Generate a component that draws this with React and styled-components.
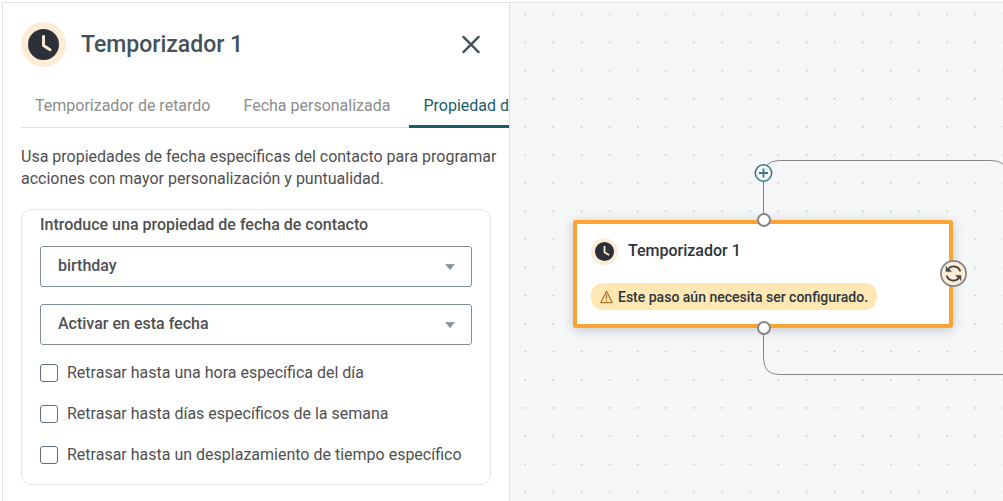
import React, { useState } from "react";
import styled, { createGlobalStyle } from "styled-components";

const GlobalStyle = createGlobalStyle`
    * {
        box-sizing: border-box;
    }
    body {
        margin: 0;
        background-color: #ffffff;
        color: #505050;
        font-family: Roboto, "Liberation Sans", sans-serif;
        font-size: 16px;
        line-height: 22px;
    }
`;

const Page = styled.div`
    display: flex;
    min-height: 100vh;
    padding: 2px 0 0 2px;
    overflow: hidden;
`;

const Panel = styled.aside`
    flex: 0 1 508px;
    min-width: 0;
    border: 1px solid #e0e3e6;
    border-bottom: 0;
    padding: 19px 18px 16px;
    background-color: #ffffff;
`;

const PanelHeader = styled.header`
    display: flex;
    align-items: center;
    gap: 15px;
`;

const ClockBadge = styled.span`
    display: flex;
    flex: none;
    align-items: center;
    justify-content: center;
    width: ${props => props.$size};
    height: ${props => props.$size};
    border-radius: 50%;
    background-color: #ffecd6;
`;

const PanelTitle = styled.h1`
    flex: 1;
    margin: 0;
    color: #43505a;
    font-size: 23px;
    font-weight: 500;
    line-height: 30px;
`;

const CloseButton = styled.button`
    display: flex;
    margin-right: 10px;
    padding: 0;
    border: 0;
    background: none;
    cursor: pointer;
`;

const Tabs = styled.div`
    display: flex;
    gap: 5px;
    margin: 16px -18px 0 0;
    overflow: hidden;
    box-shadow: inset 0 -1px 0 #dfe2e3;
`;

const Tab = styled.button`
    flex: none;
    padding: 12px 14px 8px;
    border: 0;
    border-bottom: 3px solid ${props => (props.$active ? "#1b5c6b" : "transparent")};
    background: none;
    color: ${props => (props.$active ? "#1b5c6b" : "#8c8c8c")};
    font: inherit;
    cursor: pointer;
`;

const Description = styled.p`
    margin: 18px -12px 19px 0;
`;

const Card = styled.section`
    border: 1px solid #e2e6e8;
    border-radius: 10px;
    padding: 4px 18px 18px;
`;

const FieldLabel = styled.label`
    display: block;
    margin-bottom: 10px;
    font-weight: 500;
`;

const SelectBox = styled.div`
    display: grid;
    align-items: center;
    margin-bottom: 17px;
    > * {
        grid-area: 1 / 1;
    }
    svg {
        justify-self: end;
        margin-right: 17px;
        pointer-events: none;
    }
`;

const Select = styled.select`
    appearance: none;
    width: 100%;
    height: 41px;
    padding: 0 40px 1px 17px;
    border: 1px solid #7f8f9b;
    border-radius: 3px;
    background-color: #ffffff;
    color: #505050;
    font: inherit;
    font-weight: 500;
`;

const Options = styled.div`
    display: flex;
    flex-direction: column;
    gap: 19px;
`;

const Option = styled.label`
    display: flex;
    align-items: center;
    gap: 9px;
`;

const Checkbox = styled.input`
    appearance: none;
    flex: none;
    width: 18px;
    height: 18px;
    margin: 0;
    border: 1px solid #5f6f7b;
    border-radius: 3px;
    &:checked {
        background-color: #1b5c6b;
    }
`;

const Canvas = styled.main`
    position: relative;
    flex: 1 1 0;
    min-width: 0;
    overflow: hidden;
    border-top: 1px solid #e0e3e6;
    background-color: #f6f7f9;
`;

const Wires = styled.svg`
    position: absolute;
    top: 0;
    left: 0;
    width: 100%;
    height: 100%;
`;

const Node = styled.article`
    position: absolute;
    left: 63px;
    top: 217px;
    width: 380px;
    padding: 14px;
    border: 4px solid #fba333;
    border-radius: 3px;
    background-color: #ffffff;
    box-shadow: 0 2px 12px rgba(40, 50, 60, 0.25);
`;

const NodeHeader = styled.div`
    display: flex;
    align-items: center;
    gap: 10px;
`;

const NodeTitle = styled.h2`
    margin: 0;
    padding-bottom: 2px;
    color: #2c353c;
    font-size: 16px;
    font-weight: 500;
    line-height: 22px;
`;

const Warning = styled.p`
    display: inline-flex;
    align-items: center;
    gap: 5px;
    margin: 18px 0 0;
    padding: 4px 9px 3px;
    border-radius: 12px;
    background-color: #ffe8b3;
    color: #2c353c;
    font-size: 14px;
    font-weight: 500;
    line-height: 20px;
    vertical-align: top;
`;

const Handle = styled.span`
    position: absolute;
    left: 247px;
    top: ${props => props.$top};
    width: 14px;
    height: 14px;
    border: 2px solid #858585;
    border-radius: 50%;
    background-color: #ffffff;
`;

const RoundButton = styled.button`
    position: absolute;
    left: ${props => props.$left};
    top: ${props => props.$top};
    display: flex;
    padding: 0;
    border: 0;
    background: none;
    cursor: pointer;
`;

const TABS = ["Temporizador de retardo", "Fecha personalizada", "Propiedad de fecha"];

const DELAYS = [
    "Retrasar hasta una hora específica del día",
    "Retrasar hasta días específicos de la semana",
    "Retrasar hasta un desplazamiento de tiempo específico"
];

function Clock({ size, badge }) {
    return (
        <ClockBadge $size={badge}>
            <svg width={size} height={size} viewBox="0 0 30 30" aria-hidden="true">
                <circle cx="15" cy="15" r="15" fill="#2c3038" />
                <path d="M15 7.2V16l6.4 4" fill="none" stroke="#ffecd6" strokeWidth="2.8" strokeLinecap="round" strokeLinejoin="round" />
            </svg>
        </ClockBadge>
    );
}

function Caret() {
    return (
        <svg width="10" height="6" viewBox="0 0 10 6" aria-hidden="true">
            <path d="M0.5 0.3h9L5 5.8z" fill="#8394a0" stroke="#8394a0" strokeWidth="0.5" strokeLinejoin="round" />
        </svg>
    );
}

function TimerPanel() {
    const [active, setActive] = useState(2);
    return (
        <Panel>
            <PanelHeader>
                <Clock size="31" badge="45px" />
                <PanelTitle>Temporizador 1</PanelTitle>
                <CloseButton type="button" aria-label="Cerrar">
                    <svg width="20" height="20" viewBox="0 0 20 20">
                        <path d="M2.4 1.9l15.2 15.2M17.6 1.9L2.4 17.1" stroke="#43505a" strokeWidth="2.3" strokeLinecap="round" />
                    </svg>
                </CloseButton>
            </PanelHeader>
            <Tabs role="tablist">
                {TABS.map((tab, index) => (
                    <Tab
                        key={tab}
                        type="button"
                        role="tab"
                        aria-selected={index === active}
                        $active={index === active}
                        onClick={() => setActive(index)}
                    >
                        {tab}
                    </Tab>
                ))}
            </Tabs>
            <Description>
                Usa propiedades de fecha específicas del contacto para programar acciones con mayor personalización y puntualidad.
            </Description>
            <Card>
                <FieldLabel htmlFor="property">Introduce una propiedad de fecha de contacto</FieldLabel>
                <SelectBox>
                    <Select id="property">
                        <option>birthday</option>
                    </Select>
                    <Caret />
                </SelectBox>
                <SelectBox>
                    <Select aria-label="Momento de activación">
                        <option>Activar en esta fecha</option>
                    </Select>
                    <Caret />
                </SelectBox>
                <Options>
                    {DELAYS.map(delay => (
                        <Option key={delay}>
                            <Checkbox type="checkbox" />
                            {delay}
                        </Option>
                    ))}
                </Options>
            </Card>
        </Panel>
    );
}

function Flow() {
    return (
        <Canvas>
            <Wires aria-hidden="true">
                <defs>
                    <pattern id="dots" x="1" y="-3" width="28.125" height="28.125" patternUnits="userSpaceOnUse">
                        <circle cx="14.2" cy="14.4" r="0.75" fill="#a4a8ac" />
                    </pattern>
                </defs>
                <rect width="100%" height="100%" fill="url(#dots)" />
                <g fill="none" stroke="#858585">
                    <path d="M253.5 218V173.5Q253.5 157.5 269.5 157.5H481.5Q497.5 157.5 497.5 173.5" />
                    <path d="M253.5 325V355.5Q253.5 371.5 269.5 371.5H2000" />
                </g>
            </Wires>
            <Node>
                <NodeHeader>
                    <Clock size="19" badge="27px" />
                    <NodeTitle>Temporizador 1</NodeTitle>
                </NodeHeader>
                <Warning>
                    <svg width="13" height="14" viewBox="0 0 13 14" aria-hidden="true">
                        <path d="M6.5 1.2L12.2 12.7H0.8z" fill="none" stroke="#a3762c" strokeWidth="1.2" strokeLinejoin="round" />
                        <path d="M6.5 4.8v4.2M6.5 10v1.5" stroke="#a3762c" strokeWidth="1.3" />
                    </svg>
                    Este paso aún necesita ser configurado.
                </Warning>
            </Node>
            <Handle $top="210px" />
            <Handle $top="318px" />
            <RoundButton type="button" aria-label="Añadir paso" $left="244px" $top="161px">
                <svg width="19" height="19" viewBox="0 0 19 19">
                    <circle cx="9.5" cy="9" r="8.2" fill="#f6f7f9" stroke="#3b7a8c" strokeWidth="1.6" />
                    <path d="M9.5 4.5v9M5 9h9" stroke="#3b7a8c" strokeWidth="1.8" />
                </svg>
            </RoundButton>
            <RoundButton type="button" aria-label="Repetir" $left="430px" $top="257px">
                <svg width="27" height="27" viewBox="0 0 27 27">
                    <circle cx="13.5" cy="13.5" r="12.6" fill="#ffecd6" stroke="#858585" strokeWidth="1.8" />
                    <g fill="none" stroke="#45484b" strokeWidth="1.9">
                        <path d="M20.3 11.5A7 7 0 0 0 7.6 9.7" />
                        <path d="M6.7 15.5A7 7 0 0 0 19.4 17.3" />
                    </g>
                    <path d="M6 6.3V11.6H11.4L9.4 9.6 7.9 9.8zM21 20.7V15.4H15.6L17.6 17.4 19.1 17.2z" fill="#45484b" stroke="#45484b" strokeWidth="0.5" />
                </svg>
            </RoundButton>
        </Canvas>
    );
}

function App() {
    return (
        <>
            <GlobalStyle />
            <Page>
                <TimerPanel />
                <Flow />
            </Page>
        </>
    );
}

export default App;
